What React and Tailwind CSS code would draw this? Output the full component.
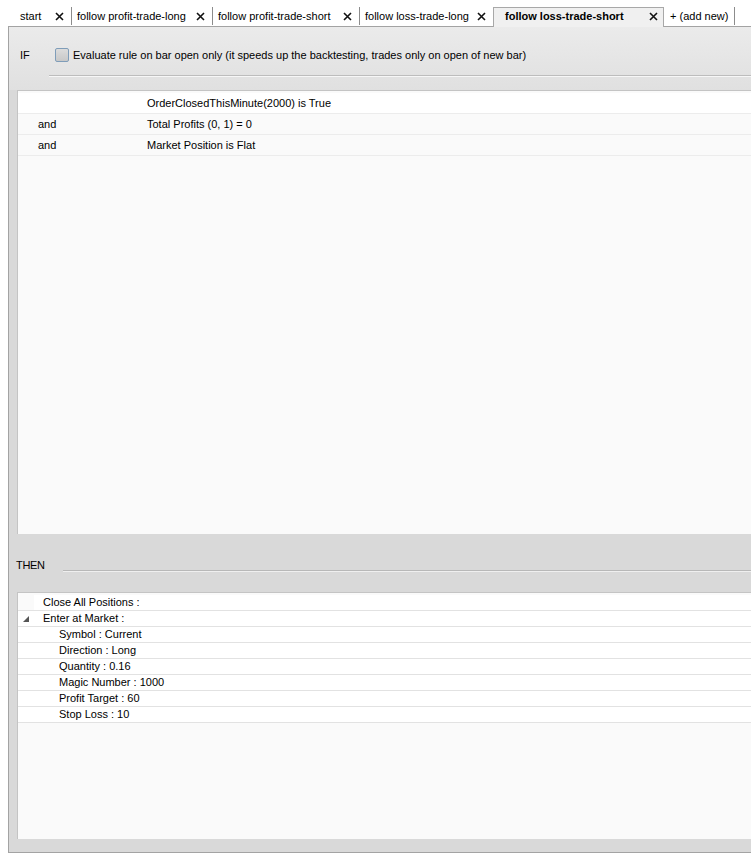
import { useState } from 'react';

const TABS = [
  { label: 'start', w: 'w-[57px]' },
  { label: 'follow profit-trade-long', w: 'w-[141px]' },
  { label: 'follow profit-trade-short', w: 'w-[147px]' },
  { label: 'follow loss-trade-long', w: 'w-[134px]' },
  { label: 'follow loss-trade-short', w: 'w-[171px]', active: true },
];

const CONDITIONS = [
  { op: '', text: 'OrderClosedThisMinute(2000) is True' },
  { op: 'and', text: 'Total Profits (0, 1) = 0' },
  { op: 'and', text: 'Market Position is Flat' },
];

const PARAMS = [
  'Symbol : Current',
  'Direction : Long',
  'Quantity : 0.16',
  'Magic Number : 1000',
  'Profit Target : 60',
  'Stop Loss : 10',
];

function CloseX() {
  return (
    <svg width="9" height="9" viewBox="0 0 9 9" className="shrink-0">
      <path d="M1 1 L8 8 M8 1 L1 8" stroke="#111" strokeWidth="1.6" />
    </svg>
  );
}

export default function App() {
  const [onOpen, setOnOpen] = useState(false);
  const [expanded, setExpanded] = useState(true);

  return (
    <div className="w-[751px] h-[858px] bg-white overflow-hidden text-[11px] text-black font-['Liberation_Sans',Arial,sans-serif]">
      {/* Tabs */}
      <div className="h-[26px] flex items-end pl-[15px]">
        {TABS.map((t, i) =>
          t.active ? (
            <div key={i} className={`${t.w} h-[20px] -ml-px flex items-center pl-[11px] pr-[5px] pb-[3px] bg-[#f0f0f0] border border-b-0 border-[#a8a8a8] font-bold relative top-px z-10`}>
              <span>{t.label}</span>
              <span className="ml-auto"><CloseX /></span>
            </div>
          ) : (
            <div key={i} className={`${t.w} h-[18px] mb-px flex items-center pl-[5px] pr-[7px] border-r border-[#8c8c8c]`}>
              <span>{t.label}</span>
              <span className="ml-auto"><CloseX /></span>
            </div>
          )
        )}
        <div className="h-[18px] mb-px flex items-center pl-[6px] pr-[6px] border-r border-[#8c8c8c]">+ (add new)</div>
      </div>

      {/* Main panel */}
      <div className="ml-[8px] h-[827px] border border-r-0 border-[#a3a3a3] bg-[#d9d9d9] flex flex-col">
        {/* IF header */}
        <div className="h-[63px] bg-gradient-to-b from-[#ebebeb] to-[#e0e0e0] pt-[20px] flex flex-col">
          <div className="h-[16px] flex items-center">
            <span className="ml-[11px] w-[35px]">IF</span>
            <button
              onClick={() => setOnOpen(!onOpen)}
              className="w-[14px] h-[14px] rounded-[2px] border border-[#7f9db9] bg-gradient-to-b from-[#dcdcdc] to-[#c8c8c8] flex items-center justify-center"
            >
              {onOpen && <span className="text-[9px] leading-none">✓</span>}
            </button>
            <span className="ml-[4px]">Evaluate rule on bar open only (it speeds up the backtesting, trades only on open of new bar)</span>
          </div>
          <div className="ml-[40px] mt-[12px] border-t border-[#bdbdbd] border-b border-b-[#f7f7f7]" />
        </div>

        {/* Conditions list */}
        <div className="ml-[8px] h-[444px] bg-[#fafafa] border-t border-l border-[#c4c4c4] pt-[2px]">
          {CONDITIONS.map((c, i) => (
            <div key={i} className={`h-[21px] flex items-center border-b border-[#ececec] ${i === 0 ? 'bg-white' : ''}`}>
              <span className="w-[129px] pl-[20px]">{c.op}</span>
              <span>{c.text}</span>
            </div>
          ))}
        </div>

        {/* THEN header */}
        <div className="h-[58px] flex flex-col">
          <div className="mt-[23px] h-[16px] flex items-center">
            <span className="ml-[7px] tracking-[-0.3px]">THEN</span>
            <div className="flex-1 ml-[18px] mt-[12px] border-t border-[#b8b8b8] border-b border-b-[#efefef]" />
          </div>
        </div>

        {/* Actions list */}
        <div className="ml-[8px] h-[247px] bg-[#fafafa] border-t border-l border-[#c4c4c4] pt-[2px]">
          <div className="h-[16px] flex items-center border-b border-[#e2e2e2] bg-white">
            <span className="w-[16px] h-full bg-[#fafafa]" />
            <span className="ml-[9px]">Close All Positions :</span>
          </div>
          <div className="h-[16px] flex items-center border-b border-[#e2e2e2] bg-white cursor-pointer" onClick={() => setExpanded(!expanded)}>
            <span className="w-[25px] pl-[5px] flex items-center">
              {expanded ? (
                <svg width="6" height="6" viewBox="0 0 6 6"><polygon points="6,0 6,6 0,6" fill="#555" /></svg>
              ) : (
                <svg width="6" height="8" viewBox="0 0 6 8"><polygon points="1,0 5,4 1,8" fill="none" stroke="#777" /></svg>
              )}
            </span>
            <span>Enter at Market :</span>
          </div>
          {expanded && PARAMS.map((p, i) => (
            <div key={i} className="h-[16px] flex items-center border-b border-[#e2e2e2] bg-white">
              <span className="pl-[41px]">{p}</span>
            </div>
          ))}
        </div>
      </div>
    </div>
  );
}
